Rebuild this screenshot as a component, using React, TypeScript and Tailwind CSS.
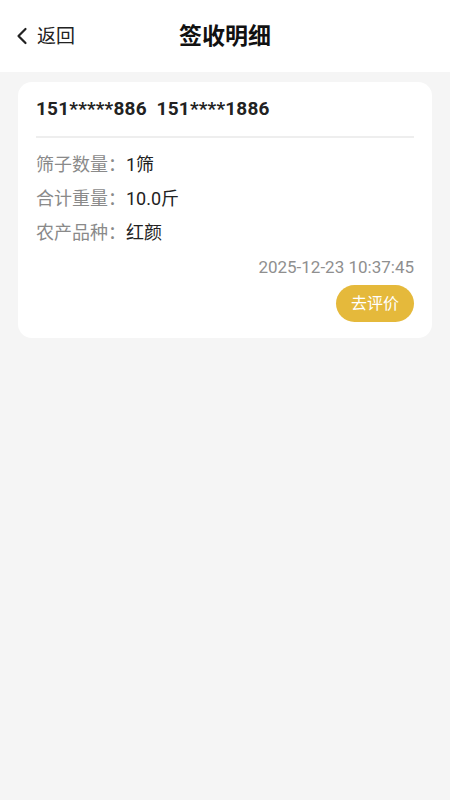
const rows = [
  { label: "筛子数量：", value: "1筛" },
  { label: "合计重量：", value: "10.0斤" },
  { label: "农产品种：", value: "红颜" },
];

export default function App() {
  return (
    <div
      className="min-h-[800px] bg-[#f5f5f5] text-[#222]"
      style={{ fontFamily: '"Roboto", "Noto Sans CJK SC", sans-serif' }}
    >
      {/* Header */}
      <div className="relative flex h-[72px] items-center justify-center bg-white">
        <div className="absolute left-[16px] top-0 flex h-full items-center gap-[9px]">
          <svg width="12" height="18" viewBox="0 0 12 18" fill="none">
            <path
              d="M9.5 2 L2.5 9 L9.5 16"
              stroke="#222"
              strokeWidth="2.2"
              strokeLinecap="round"
              strokeLinejoin="round"
            />
          </svg>
          <span className="text-[19px] leading-none text-[#222]">返回</span>
        </div>
        <h1 className="text-[23px] font-bold leading-none text-[#111]">
          签收明细
        </h1>
      </div>

      {/* Card */}
      <div className="px-[18px] pt-[10px]">
        <div className="rounded-[14px] bg-white px-[18px] pb-[16px] pt-[14px]">
          <div className="border-b-2 border-[#eeeeee] pb-[14px] text-[19px] font-bold leading-[26px] tracking-[0.2px] text-[#222]">
            151*****886&nbsp;&nbsp;151****1886
          </div>
          <div className="flex flex-col gap-[10px] pt-[15px]">
            {rows.map((r) => (
              <div key={r.label} className="flex text-[18px] leading-[24px]">
                <span className="text-[#8a8a8a]">{r.label}</span>
                <span className="text-[#222]">{r.value}</span>
              </div>
            ))}
          </div>
          <div className="mt-[10px] text-right text-[17px] leading-[24px] text-[#8f8f8f]">
            2025-12-23 10:37:45
          </div>
          <div className="mt-[6px] flex justify-end">
            <button className="flex h-[37px] w-[78px] items-center justify-center rounded-full bg-[#e5b93b] text-[16px] text-white">
              去评价
            </button>
          </div>
        </div>
      </div>
    </div>
  );
}
